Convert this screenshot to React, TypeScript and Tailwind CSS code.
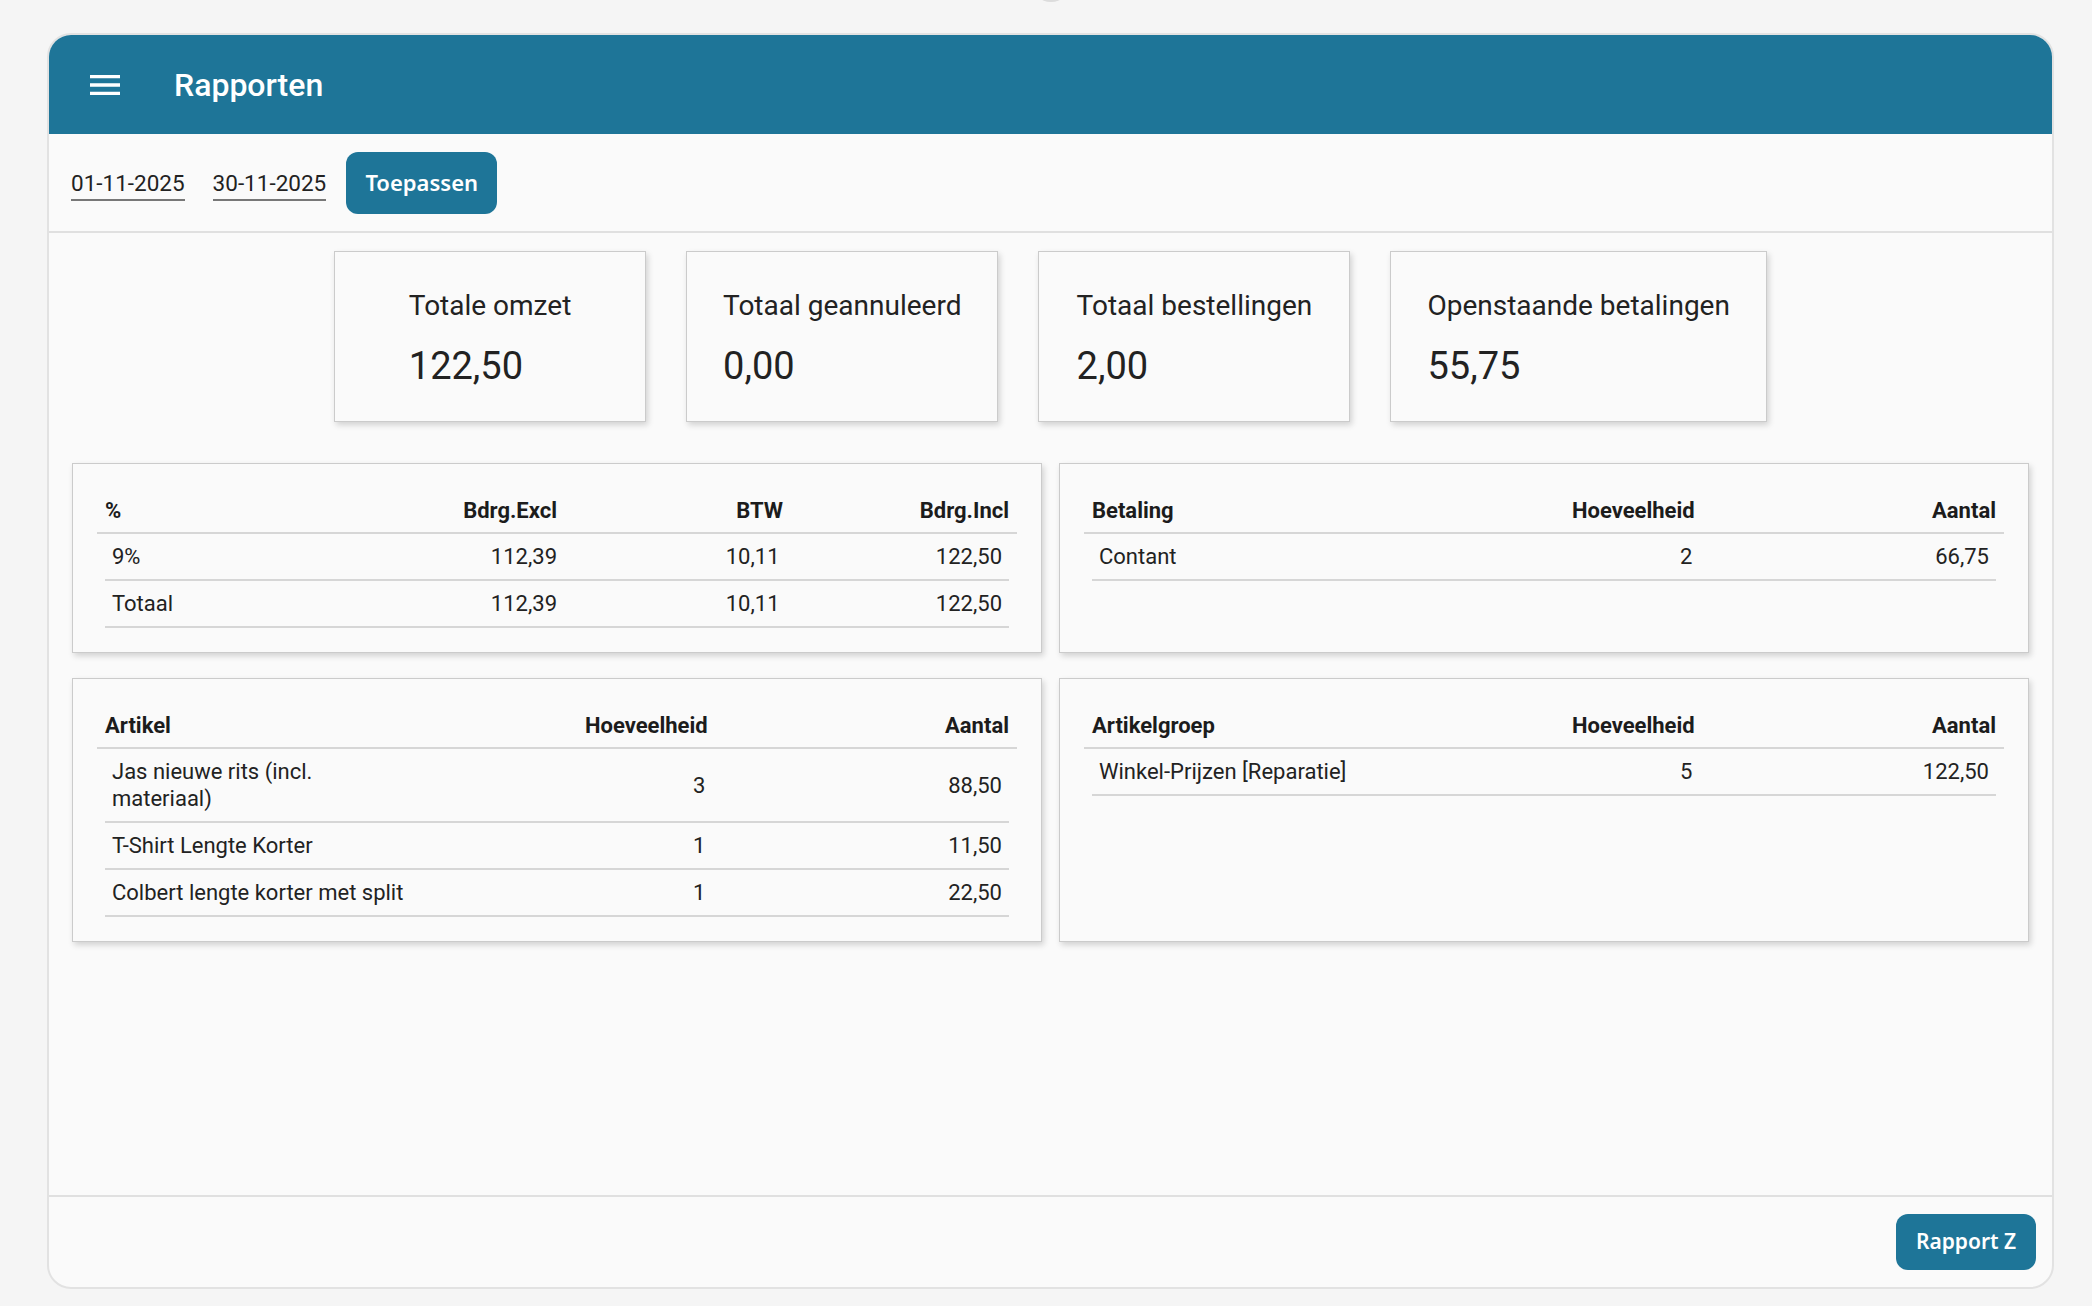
import React from "react";

const stats = [
  { title: "Totale omzet", value: "122,50" },
  { title: "Totaal geannuleerd", value: "0,00" },
  { title: "Totaal bestellingen", value: "2,00" },
  { title: "Openstaande betalingen", value: "55,75" },
];

type TableProps = {
  cols: string[];
  rows: string[][];
};

function ReportTable({ cols, rows }: TableProps) {
  const grid = cols.length === 4 ? "grid-cols-4" : "grid-cols-3";
  return (
    <div className="border border-[#cbcbcb] bg-[#fafafa] shadow-[2px_3px_6px_rgba(0,0,0,0.16)] p-6">
      <div
        className={`grid ${grid} h-[46px] items-center px-2 border-b-2 border-[#d6d6d6] text-[22px] font-bold text-[#1c1c1c]`}
      >
        {cols.map((c, i) => (
          <div key={c} className={i === 0 ? "text-left" : "text-right"}>
            {c}
          </div>
        ))}
      </div>
      {rows.map((r, ri) => (
        <div
          key={ri}
          className={`grid ${grid} items-center mx-2 px-[7px] py-[9px] leading-[27px] border-b-2 border-[#d6d6d6] text-[22px] text-[#222]`}
        >
          {r.map((v, i) => (
            <div key={i} className={i === 0 ? "text-left" : "text-right"}>
              {v}
            </div>
          ))}
        </div>
      ))}
    </div>
  );
}

export default function App() {
  return (
    <div className="relative h-[1306px] w-full overflow-hidden bg-[#f5f5f5] pt-[33px] pl-[47px] pr-[38px] pb-[17px] font-[family-name:Roboto,sans-serif]">
      <div className="absolute top-[-38px] left-[1031px] w-[40px] h-[40px] rounded-full bg-[#dcdcdc]" />

      <div className="flex flex-col h-full rounded-[24px] border-2 border-[#e2e2e2] bg-[#fafafa] overflow-hidden">
        {/* header */}
        <div className="flex items-center h-[99px] bg-[#1e7598] pl-[36px] shrink-0">
          <svg width="40" height="40" viewBox="0 0 24 24" fill="#ffffff">
            <path d="M3 18h18v-2H3v2zm0-5h18v-2H3v2zm0-7v2h18V6H3z" />
          </svg>
          <div className="ml-[49px] text-[32px] font-medium text-white leading-none">
            Rapporten
          </div>
        </div>

        {/* filters */}
        <div className="flex items-center h-[99px] pl-[22px] border-b-2 border-[#e0e0e0] shrink-0">
          <div className="pt-[5px] pb-[3px] border-b-2 border-[#777] text-[22.5px] leading-[26px] text-[#222]">
            01-11-2025
          </div>
          <div className="ml-[28px] pt-[5px] pb-[3px] border-b-2 border-[#777] text-[22.5px] leading-[26px] text-[#222]">
            30-11-2025
          </div>
          <button className="ml-[20px] h-[62px] w-[151px] rounded-[12px] bg-[#1e7598] text-white text-[22px] font-semibold font-[family-name:'Noto_Sans',sans-serif]">
            Toepassen
          </button>
        </div>

        {/* content */}
        <div className="flex-1 flex flex-col">
          <div className="flex justify-center gap-[40px] pt-[18px]">
            {stats.map((s) => (
              <div
                key={s.title}
                className="flex items-center justify-center h-[171px] min-w-[312px] px-9 pt-[4px] border border-[#cbcbcb] bg-[#fafafa] shadow-[2px_3px_6px_rgba(0,0,0,0.16)]"
              >
                <div className="flex flex-col">
                  <div className="text-[28px] leading-[34px] text-[#222]">{s.title}</div>
                  <div className="mt-[20px] text-[38px] leading-[46px] text-[#222]">{s.value}</div>
                </div>
              </div>
            ))}
          </div>

          <div className="grid grid-cols-2 items-stretch gap-x-[17px] gap-y-[25px] px-[23px] pt-[41px]">
            <ReportTable
              cols={["%", "Bdrg.Excl", "BTW", "Bdrg.Incl"]}
              rows={[
                ["9%", "112,39", "10,11", "122,50"],
                ["Totaal", "112,39", "10,11", "122,50"],
              ]}
            />
            <ReportTable
              cols={["Betaling", "Hoeveelheid", "Aantal"]}
              rows={[["Contant", "2", "66,75"]]}
            />
            <ReportTable
              cols={["Artikel", "Hoeveelheid", "Aantal"]}
              rows={[
                ["Jas nieuwe rits (incl. materiaal)", "3", "88,50"],
                ["T-Shirt Lengte Korter", "1", "11,50"],
                ["Colbert lengte korter met split", "1", "22,50"],
              ]}
            />
            <ReportTable
              cols={["Artikelgroep", "Hoeveelheid", "Aantal"]}
              rows={[["Winkel-Prijzen [Reparatie]", "5", "122,50"]]}
            />
          </div>
        </div>

        {/* footer */}
        <div className="flex items-center justify-end h-[92px] pr-4 border-t-2 border-[#e0e0e0] shrink-0">
          <button className="h-[56px] w-[140px] rounded-[12px] bg-[#1e7598] text-white text-[21px] font-semibold font-[family-name:'Noto_Sans',sans-serif]">
            Rapport Z
          </button>
        </div>
      </div>
    </div>
  );
}
